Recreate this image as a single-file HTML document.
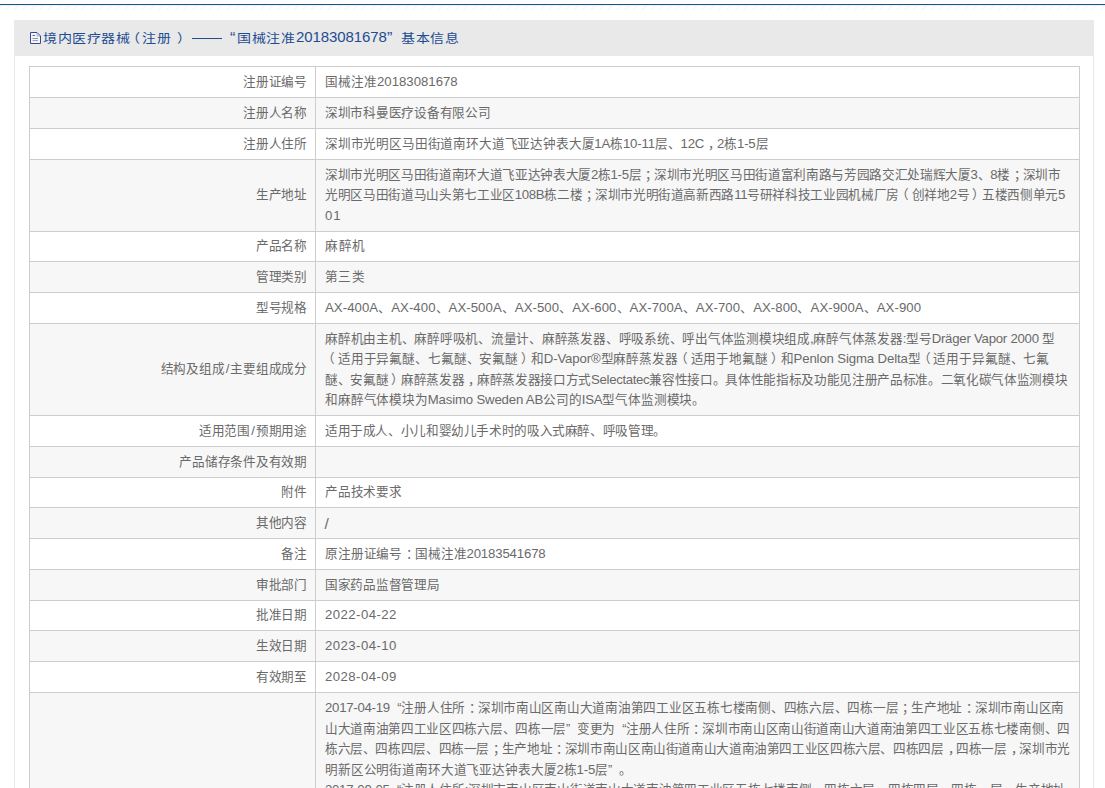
<!DOCTYPE html>
<html lang="zh-CN"><head><meta charset="utf-8"><title>境内医疗器械（注册）</title>
<style>
html,body{margin:0;padding:0;background:#fff;}
body{text-spacing-trim:space-all;width:1105px;height:788px;overflow:hidden;position:relative;font-family:"Liberation Sans",sans-serif;font-size:12.6px;color:#6a6a6a;}
i{font-style:normal;font-size:13.2px;}
.pm{position:relative;left:4px}.po{position:relative;left:-3px}.pcl{position:relative;left:3px}.lq{margin-left:4px}.rq{margin-right:4px}
u{text-decoration:none;font-size:15.5px;position:relative;top:2px;left:-0.5px;}
.lab i{padding:0 1.2px;}
.topline{position:absolute;left:0;top:4px;width:1105px;height:1px;background:#1f5080;}
.topline2{position:absolute;left:0;top:5px;width:1105px;height:1px;background:#e3f7fb;}
.hatch{position:absolute;left:0;top:6px;width:1105px;height:4px;background:repeating-linear-gradient(135deg,#fbf7f4 0 1.5px,#fff 1.5px 6px);}
.panel{position:absolute;left:14px;top:20px;width:1078px;height:900px;border-left:1px solid #e6e6e6;border-right:1px solid #e6e6e6;}
.phead{position:absolute;left:14px;top:20px;width:1080px;height:36px;background:#e9e9e9;}
.title{position:absolute;top:29px;line-height:20px;font-size:14px;transform:scaleY(0.88);transform-origin:0 10px;color:#1d4c92;white-space:nowrap;}
.title i{font-size:14.6px;}
.dash{position:absolute;left:192px;top:38px;width:30px;height:1px;background:#1f4f86;}
.icon{position:absolute;left:30px;top:32px;}
.row{position:absolute;left:29px;width:1049px;border-top:1px solid #cdcdcd;border-left:1px solid #cdcdcd;border-right:1px solid #cdcdcd;}
.row.g{background:#f7f7f7;}
.lab{position:absolute;left:0;top:0;bottom:0;width:285px;border-right:1px solid #cdcdcd;display:flex;align-items:center;justify-content:flex-end;}
.lab span{padding-right:8px;letter-spacing:-0.22px;line-height:20.5px;white-space:nowrap;}
.val{position:absolute;left:286px;right:0;top:0;bottom:0;display:flex;align-items:center;}
.val>div{padding-left:9px;line-height:20.5px;white-space:nowrap;}
.val>div>b{font-weight:normal;display:block;}
</style></head><body>
<div class="topline"></div><div class="topline2"></div><div class="hatch"></div>
<div class="panel"></div>
<div class="phead"></div>
<svg class="icon" width="11" height="12" viewBox="0 0 11 12"><path d="M0.5 0.5H7L10.5 4V11.5H0.5Z" fill="#f3f5fa" stroke="#3a4a92" stroke-width="1"/><path d="M7 1V4H10" fill="none" stroke="#8d9ad0" stroke-width="0.8"/><path d="M2.5 3.5H5" stroke="#4a5590" stroke-width="0.9"/><path d="M2.5 6.5H8" stroke="#8f9270" stroke-width="0.9"/><path d="M2.5 8.5H8" stroke="#8a95c0" stroke-width="0.9"/></svg>
<div class="title" style="left:43px;letter-spacing:0.5px">境内医疗器械</div>
<div class="title" style="left:126px">（</div><div class="title" style="left:142px;letter-spacing:0.5px">注册</div><div class="title" style="left:177px">）</div>
<div class="dash"></div>
<div class="title" style="left:230px;top:29px;font-size:16px;transform:none">“</div>
<div class="title" style="left:237px;letter-spacing:0.5px">国械注准</div>
<div class="title" style="left:296px;top:27px;font-size:15px;letter-spacing:-0.1px;transform:none">20183081678</div>
<div class="title" style="left:387px;top:29px;font-size:16px;transform:none">”</div>
<div class="title" style="left:401px;letter-spacing:0.5px">基本信息</div>

<div class="row" style="top:66px;height:30px"><div class="lab"><span>注册证编号</span></div><div class="val"><div><b>国械注准<i>20183081678</i></b></div></div></div>
<div class="row g" style="top:97px;height:30px"><div class="lab"><span>注册人名称</span></div><div class="val"><div><b style="letter-spacing:-0.258px">深圳市科曼医疗设备有限公司</b></div></div></div>
<div class="row" style="top:128px;height:30px"><div class="lab"><span>注册人住所</span></div><div class="val"><div><b style="letter-spacing:-0.175px">深圳市光明区马田街道南环大道飞亚达钟表大厦<i>1A</i>栋<i>10-11</i>层、<i>12C</i><span class="pm">，</span><i>2</i>栋<i>1-5</i>层</b></div></div></div>
<div class="row g" style="top:159px;height:71px"><div class="lab"><span>生产地址</span></div><div class="val"><div><b style="letter-spacing:-0.337px">深圳市光明区马田街道南环大道飞亚达钟表大厦<i>2</i>栋<i>1-5</i>层<span class="pm">；</span>深圳市光明区马田街道富利南路与芳园路交汇处瑞辉大厦<i>3</i>、<i>8</i>楼<span class="pm">；</span>深圳市</b><b style="letter-spacing:-0.344px">光明区马田街道马山头第七工业区<i>108B</i>栋二楼<span class="pm">；</span>深圳市光明街道高新西路<i>11</i>号研祥科技工业园机械厂房<span class="po">（</span>创祥地<i>2</i>号<span class="pcl">）</span>五楼西侧单元<i>5</i></b><b style="letter-spacing:0.900px"><i>01</i></b></div></div></div>
<div class="row" style="top:231px;height:29px"><div class="lab"><span>产品名称</span></div><div class="val"><div><b style="letter-spacing:0.550px">麻醉机</b></div></div></div>
<div class="row g" style="top:261px;height:30px"><div class="lab"><span>管理类别</span></div><div class="val"><div><b style="letter-spacing:0.400px">第三类</b></div></div></div>
<div class="row" style="top:292px;height:30px"><div class="lab"><span>型号规格</span></div><div class="val"><div><b style="letter-spacing:0.053px"><i>AX-400A</i>、<i>AX-400</i>、<i>AX-500A</i>、<i>AX-500</i>、<i>AX-600</i>、<i>AX-700A</i>、<i>AX-700</i>、<i>AX-800</i>、<i>AX-900A</i>、<i>AX-900</i></b></div></div></div>
<div class="row g" style="top:323px;height:91px"><div class="lab"><span>结构及组成<i>/</i>主要组成成分</span></div><div class="val"><div><b style="letter-spacing:-0.239px">麻醉机由主机、麻醉呼吸机、流量计、麻醉蒸发器、呼吸系统、呼出气体监测模块组成<i>,</i>麻醉气体蒸发器<i>:</i>型号<i>Dräger Vapor 2000 </i>型</b><b style="letter-spacing:-0.135px"><span class="po">（</span>适用于异氟醚、七氟醚、安氟醚<span class="pcl">）</span>和<i>D-Vapor®</i>型麻醉蒸发器<span class="po">（</span>适用于地氟醚<span class="pcl">）</span>和<i>Penlon Sigma Delta</i>型<span class="po">（</span>适用于异氟醚、七氟</b><b style="letter-spacing:-0.330px">醚、安氟醚<span class="pcl">）</span>麻醉蒸发器<span class="pm">，</span>麻醉蒸发器接口方式<i>Selectatec</i>兼容性接口。具体性能指标及功能见注册产品标准。二氧化碳气体监测模块</b><b style="letter-spacing:-0.162px">和麻醉气体模块为<i>Masimo Sweden AB</i>公司的<i>ISA</i>型气体监测模块。</b></div></div></div>
<div class="row" style="top:415px;height:30px"><div class="lab"><span>适用范围<i>/</i>预期用途</span></div><div class="val"><div><b style="letter-spacing:-0.377px">适用于成人、小儿和婴幼儿手术时的吸入式麻醉、呼吸管理。</b></div></div></div>
<div class="row g" style="top:446px;height:30px"><div class="lab"><span>产品储存条件及有效期</span></div><div class="val"><div><b></b></div></div></div>
<div class="row" style="top:477px;height:29px"><div class="lab"><span>附件</span></div><div class="val"><div><b style="letter-spacing:-0.200px">产品技术要求</b></div></div></div>
<div class="row g" style="top:507px;height:30px"><div class="lab"><span>其他内容</span></div><div class="val"><div><b><u>/</u></b></div></div></div>
<div class="row" style="top:538px;height:30px"><div class="lab"><span>备注</span></div><div class="val"><div><b style="letter-spacing:-0.143px">原注册证编号<span class="pm">：</span>国械注准<i>20183541678</i></b></div></div></div>
<div class="row g" style="top:569px;height:30px"><div class="lab"><span>审批部门</span></div><div class="val"><div><b style="letter-spacing:-0.300px">国家药品监督管理局</b></div></div></div>
<div class="row" style="top:600px;height:29px"><div class="lab"><span>批准日期</span></div><div class="val"><div><b style="letter-spacing:0.444px"><i>2022-04-22</i></b></div></div></div>
<div class="row g" style="top:630px;height:30px"><div class="lab"><span>生效日期</span></div><div class="val"><div><b style="letter-spacing:0.444px"><i>2023-04-10</i></b></div></div></div>
<div class="row" style="top:661px;height:30px"><div class="lab"><span>有效期至</span></div><div class="val"><div><b style="letter-spacing:0.444px"><i>2028-04-09</i></b></div></div></div>
<div class="row g" style="top:692px;height:207px"><div class="lab"></div><div class="val" style="align-items:flex-start"><div style="padding-top:5px"><b style="letter-spacing:-0.254px"><i>2017-04-19 </i><span class="lq">“</span>注册人住所<span class="pm">：</span>深圳市南山区南山大道南油第四工业区五栋七楼南侧、四栋六层、四栋一层<span class="pm">；</span>生产地址<span class="pm">：</span>深圳市南山区南</b><b style="letter-spacing:-0.320px">山大道南油第四工业区四栋六层、四栋一层<span class="rq">”</span> 变更为 <span class="lq">“</span>注册人住所<span class="pm">：</span>深圳市南山区南山街道南山大道南油第四工业区五栋七楼南侧、四</b><b style="letter-spacing:-0.376px">栋六层、四栋四层、四栋一层<span class="pm">；</span>生产地址<span class="pm">：</span>深圳市南山区南山街道南山大道南油第四工业区四栋六层、四栋四层<span class="pm">，</span>四栋一层<span class="pm">，</span>深圳市光</b><b style="letter-spacing:-0.142px">明新区公明街道南环大道飞亚达钟表大厦<i>2</i>栋<i>1-5</i>层<span class="rq">”</span> 。</b><b style="letter-spacing:-0.278px"><i>2017-09-05 </i><span class="lq">“</span>注册人住所<i>:</i>深圳市南山区南山街道南山大道南油第四工业区五栋七楼南侧、四栋六层、四栋四层、四栋一层<span class="pm">，</span>生产地址</b><b style="letter-spacing:-0.278px"><span class="pm">：</span>深圳市南山区南山街道南山大道南油第四工业区四栋六层、四栋四层<span class="pm">，</span>四栋一层<span class="pm">，</span>深圳市光明新区公明街道南环大道飞亚达钟表大厦</b></div></div></div>
</body></html>
